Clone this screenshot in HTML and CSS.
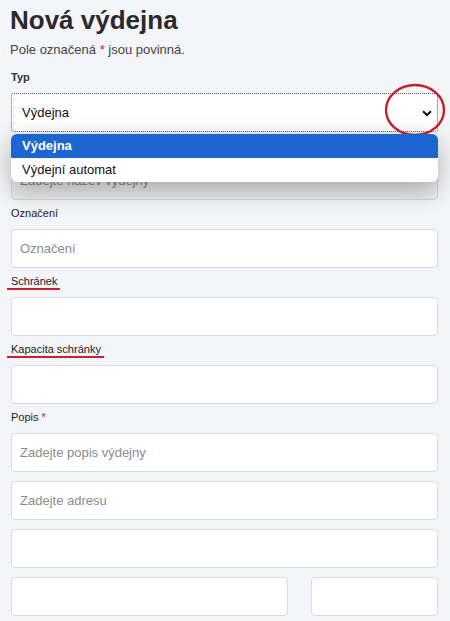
FILE: index.html
```html
<!DOCTYPE html>
<html lang="cs">
<head>
<meta charset="utf-8">
<title>Nová výdejna</title>
<link rel="stylesheet" href="styles.css">
</head>
<body>
<main class="page">
  <h1 class="title">Nová výdejna</h1>
  <p class="note">Pole označená <span class="req">*</span> jsou povinná.</p>

  <div class="field field-typ">
    <label class="label label-strong">Typ</label>
    <div class="select">
      <span class="select-value">Výdejna</span>
      <svg class="chevron" width="10" height="7" viewBox="0 0 10 7"><path d="M1 1.2 L5 5 L9 1.2" fill="none" stroke="#111" stroke-width="2"/></svg>
    </div>
    <svg class="circle-mark" width="64" height="56" viewBox="0 0 64 56"><ellipse cx="32" cy="28" rx="29" ry="25" fill="none" stroke="#c41f2c" stroke-width="2.4"/></svg>
    <ul class="dropdown">
      <li class="option option-active">Výdejna</li>
      <li class="option">Výdejní automat</li>
    </ul>
  </div>

  <div class="field">
    <label class="label label-hidden">Název <span class="req">*</span></label>
    <div class="input input-behind"><span class="ph">Zadejte název výdejny</span></div>
  </div>

  <div class="field">
    <label class="label">Označení</label>
    <div class="input"><span class="ph">Označení</span></div>
  </div>

  <div class="field">
    <label class="label"><span class="mark">Schránek</span></label>
    <div class="input"></div>
  </div>

  <div class="field">
    <label class="label"><span class="mark">Kapacita schránky</span></label>
    <div class="input"></div>
  </div>

  <div class="field field-last">
    <label class="label">Popis <span class="req">*</span></label>
    <div class="stack">
      <div class="input"><span class="ph">Zadejte popis výdejny</span></div>
      <div class="input"><span class="ph">Zadejte adresu</span></div>
      <div class="input"></div>
      <div class="row">
        <div class="input"></div>
        <div class="input"></div>
      </div>
    </div>
  </div>
</main>
</body>
</html>
```

FILE: styles.css
```css
html, body {
  margin: 0;
  padding: 0;
  background: #f4f5f9;
  font-family: "Liberation Sans", Arial, sans-serif;
  color: #222;
}
.page {
  padding: 5px 12px 0 11px;
  overflow: hidden;
  height: 621px;
  box-sizing: border-box;
}
.title {
  margin: 0 0 0 -1px;
  font-size: 26px;
  line-height: 30px;
  font-weight: bold;
  color: #2a2a2a;
}
.note {
  margin: 7px 0 13px -1px;
  font-size: 13px;
  line-height: 16px;
  color: #444;
}
.req { color: #c8202e; }
.field {
  position: relative;
  display: flex;
  flex-direction: column;
  margin-bottom: 7px;
}
.label {
  font-size: 11px;
  line-height: 13px;
  color: #222;
  margin-bottom: 9px;
}
.label-strong { font-weight: bold; color: #333; }
.label-hidden { visibility: hidden; }
.mark {
  border-bottom: 2px solid #c8202e;
  padding: 0 3px 1px 4px;
  margin-left: -4px;
}
.select, .input {
  box-sizing: border-box;
  height: 39px;
  background: #fff;
  border: 1px solid #dcdcdc;
  border-radius: 4px;
  display: flex;
  align-items: center;
  font-size: 13px;
}
.select {
  border: 1px dotted #555;
  border-radius: 3px;
  padding: 0 5px 0 10px;
  justify-content: space-between;
  color: #111;
}
.chevron { display: block; margin-top: 2px; }
.input { padding: 0 8px; }
.input-behind { background: #ececec; border-color: #d6d6d6; }
.ph { color: #8b8b8b; }
.circle-mark {
  position: absolute;
  left: 372px;
  top: 11px;
}
.dropdown {
  position: absolute;
  left: 0;
  right: 0;
  top: 63px;
  margin: 0;
  padding: 0;
  list-style: none;
  background: #fff;
  border-radius: 6px;
  overflow: hidden;
  box-shadow: 0 8px 26px rgba(0, 0, 0, 0.3);
  z-index: 5;
}
.option {
  height: 24px;
  line-height: 24px;
  padding: 0 11px;
  font-size: 13px;
  color: #111;
}
.option-active {
  background: #1c66d1;
  color: #fff;
  font-weight: bold;
}
.stack {
  display: flex;
  flex-direction: column;
  gap: 9px;
}
.row {
  display: grid;
  grid-template-columns: 1fr 127px;
  gap: 23px;
}
```
